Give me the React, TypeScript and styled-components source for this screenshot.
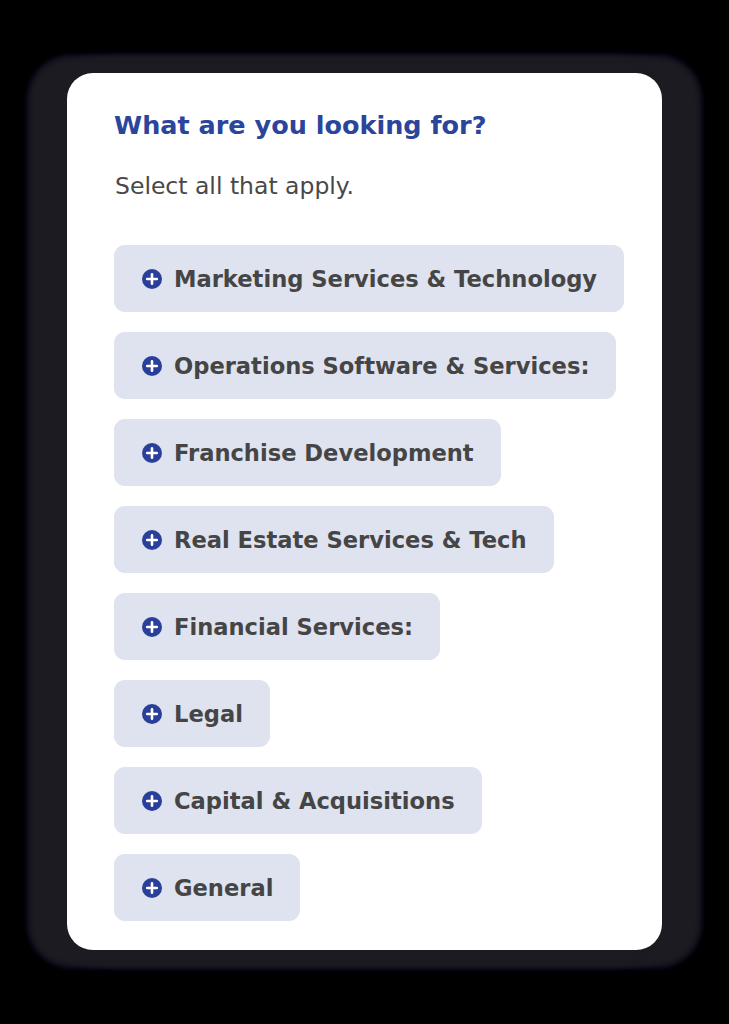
import React from 'react';
import styled, { createGlobalStyle } from 'styled-components';

const GlobalStyle = createGlobalStyle`
  html, body {
    margin: 0;
    padding: 0;
    background: #000;
  }
  body {
    font-family: "DejaVu Sans", Inter, Arial, sans-serif;
  }
`;

const Page = styled.div`
  display: flex;
  justify-content: center;
  padding-top: 73px;
  min-height: 1024px;
  box-sizing: border-box;
`;

const Card = styled.div`
  width: 595px;
  height: 877px;
  box-sizing: border-box;
  background: #fff;
  border-radius: 26px;
  padding: 37px 30px 0 47px;
  box-shadow:
    -22px 0 5px 16px #1c1b21,
    22px 0 5px 16px #1c1b21,
    0 0 5px 16px #1c1b21,
    -22px 0 6px 18px #0b0c22,
    22px 0 6px 18px #0b0c22,
    0 0 6px 18px #0b0c22;
`;

const Title = styled.h1`
  margin: 0;
  font-size: 25.5px;
  line-height: 30px;
  font-weight: 700;
  color: #2b449c;
`;

const Subtitle = styled.p`
  margin: 32px 0 0 1px;
  font-size: 23.5px;
  line-height: 28px;
  font-weight: 400;
  color: #484848;
`;

const Options = styled.div`
  display: flex;
  flex-direction: column;
  align-items: flex-start;
  gap: 20px;
  margin-top: 45px;
`;

const Chip = styled.button`
  display: flex;
  align-items: center;
  flex-shrink: 0;
  gap: 12px;
  height: 67px;
  padding: 0 27px 0 28px;
  border: none;
  border-radius: 11px;
  background: #dfe2ef;
  font-family: inherit;
  font-size: 22.6px;
  font-weight: 700;
  white-space: nowrap;
  color: #454545;
  cursor: pointer;
`;

const PlusIcon = () => (
  <svg width="20" height="20" viewBox="0 0 20 20">
    <circle cx="10" cy="10" r="10" fill="#2a3f9a" />
    <path d="M10 5.2v9.6M5.2 10h9.6" stroke="#fff" strokeWidth="2.6" strokeLinecap="round" />
  </svg>
);

const options = [
  'Marketing Services & Technology',
  'Operations Software & Services:',
  'Franchise Development',
  'Real Estate Services & Tech',
  'Financial Services:',
  'Legal',
  'Capital & Acquisitions',
  'General',
];

export default function App() {
  return (
    <>
      <GlobalStyle />
      <Page>
        <Card>
          <Title>What are you looking for?</Title>
          <Subtitle>Select all that apply.</Subtitle>
          <Options>
            {options.map((o) => (
              <Chip key={o} type="button">
                <PlusIcon />
                {o}
              </Chip>
            ))}
          </Options>
        </Card>
      </Page>
    </>
  );
}
